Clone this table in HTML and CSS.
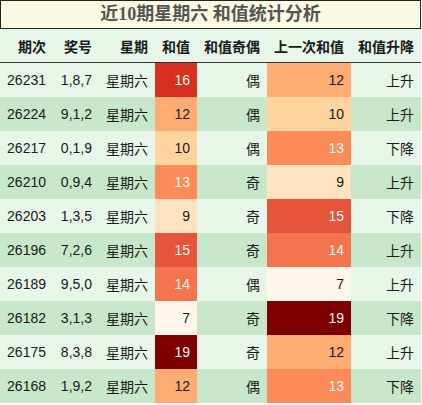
FILE: index.html
```html
<!DOCTYPE html>
<html>
<head>
<meta charset="utf-8">
<link rel="stylesheet" href="styles.css">
</head>
<body>
<div class="wrap">
  <div class="title">近10期星期六 和值统计分析</div>
  <table class="grid">
    <colgroup>
      <col class="c1"><col class="c2"><col class="c3"><col class="c4"><col class="c5"><col class="c6"><col class="c7">
    </colgroup>
    <thead>
      <tr><th>期次</th><th>奖号</th><th>星期</th><th>和值</th><th>和值奇偶</th><th>上一次和值</th><th>和值升降</th></tr>
    </thead>
    <tbody>
      <tr class="odd"><td>26231</td><td>1,8,7</td><td>星期六</td><td class="h16 lt">16</td><td>偶</td><td class="h12">12</td><td>上升</td></tr>
      <tr class="even"><td>26224</td><td>9,1,2</td><td>星期六</td><td class="h12">12</td><td>偶</td><td class="h10">10</td><td>上升</td></tr>
      <tr class="odd"><td>26217</td><td>0,1,9</td><td>星期六</td><td class="h10">10</td><td>偶</td><td class="h13 lt">13</td><td>下降</td></tr>
      <tr class="even"><td>26210</td><td>0,9,4</td><td>星期六</td><td class="h13 lt">13</td><td>奇</td><td class="h9">9</td><td>上升</td></tr>
      <tr class="odd"><td>26203</td><td>1,3,5</td><td>星期六</td><td class="h9">9</td><td>奇</td><td class="h15 lt">15</td><td>下降</td></tr>
      <tr class="even"><td>26196</td><td>7,2,6</td><td>星期六</td><td class="h15 lt">15</td><td>奇</td><td class="h14 lt">14</td><td>上升</td></tr>
      <tr class="odd"><td>26189</td><td>9,5,0</td><td>星期六</td><td class="h14 lt">14</td><td>偶</td><td class="h7">7</td><td>上升</td></tr>
      <tr class="even"><td>26182</td><td>3,1,3</td><td>星期六</td><td class="h7">7</td><td>奇</td><td class="h19 lt">19</td><td>下降</td></tr>
      <tr class="odd"><td>26175</td><td>8,3,8</td><td>星期六</td><td class="h19 lt">19</td><td>奇</td><td class="h12">12</td><td>上升</td></tr>
      <tr class="even"><td>26168</td><td>1,9,2</td><td>星期六</td><td class="h12">12</td><td>偶</td><td class="h13 lt">13</td><td>下降</td></tr>
    </tbody>
  </table>
</div>
</body>
</html>
```
FILE: styles.css
```css
html, body {
  margin: 0;
  padding: 0;
  background: #ffffff;
}
.wrap {
  width: 421px;
  font-family: "Liberation Sans", "Noto Sans CJK SC", sans-serif;
  color: #1a1a1a;
}
.title {
  box-sizing: border-box;
  height: 29px;
  border: 1px solid #222;
  background: #fbf8e2;
  color: #555555;
  font-family: "Liberation Serif", "Noto Sans CJK SC", serif;
  font-weight: bold;
  font-size: 18px;
  line-height: 26px;
  text-align: center;
}
.grid {
  width: 421px;
  border-collapse: collapse;
  table-layout: fixed;
  font-size: 14px;
}
.c1 { width: 53px; }
.c2 { width: 46px; }
.c3 { width: 56px; }
.c4 { width: 42px; }
.c5 { width: 70px; }
.c6 { width: 84px; }
.c7 { width: 70px; }
.grid th {
  height: 33px;
  padding: 0 7px 0 0;
  text-align: right;
  font-family: "Noto Sans CJK SC", sans-serif;
  font-weight: bold;
  font-size: 14px;
  color: #1a1a1a;
  background: #e8f5e9;
  border-bottom: 1px solid #333;
}
.grid td {
  height: 34px;
  padding: 0 7px 0 0;
  text-align: right;
  white-space: nowrap;
}
.odd td { background: #e8f5e9; }
.even td { background: #c8e6c9; }
.grid td.h7 { background: #fff5eb; }
.grid td.h9 { background: #fee3c0; }
.grid td.h10 { background: #fdd49e; }
.grid td.h12 { background: #fdac74; }
.grid td.h13 { background: #fc8b59; }
.grid td.h14 { background: #f3744f; }
.grid td.h15 { background: #e6553b; }
.grid td.h16 { background: #d73020; }
.grid td.h19 { background: #7f0000; }
.grid td.lt { color: #fff5eb; }
```
